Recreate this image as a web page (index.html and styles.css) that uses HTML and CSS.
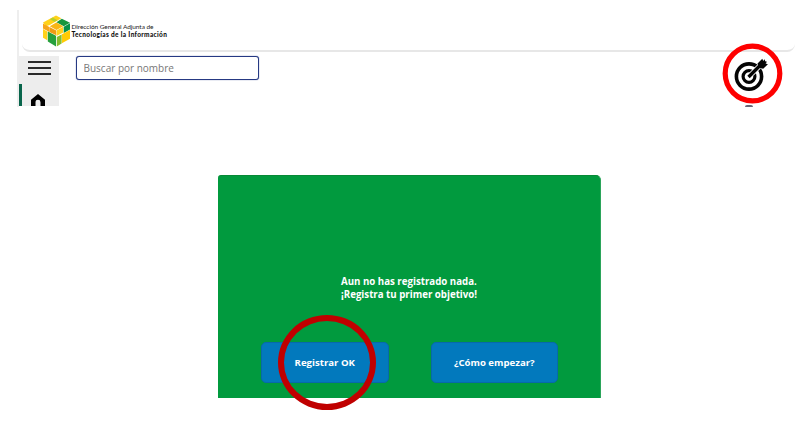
FILE: index.html
```html
<!DOCTYPE html>
<html lang="es">
<head>
<meta charset="utf-8">
<title>Objetivos</title>
<link rel="stylesheet" href="styles.css">
</head>
<body>
<section class="app">
  <header class="topbar">
    <svg class="logo" viewBox="0 0 28 32">
      <path fill="#ffd21a" d="M0 7.300 13.500 0l5.500 2.800L7 9.800 3 11z"/>
      <path fill="#b5cf2b" d="M7 3.700 10 2l5 2.800-3 1.700z"/>
      <path fill="#16973c" d="M19.500 3.200 28 7.500 21.500 11 14 7z"/>
      <path fill="#f8b617" d="M13.800 7.200 21 11 14 15 7 11.200z"/>
      <path fill="#f6a51a" d="M0 8.300l7 3.800v5.200L0 13.500z"/>
      <path fill="#ffd21a" d="M0 14l4.500 2.500v9L0 23z"/>
      <path fill="#26a03d" d="M5 16.400l8.500 4.600V32L5 27z"/>
      <path fill="#ef9b13" d="M7.200 12l6.500 3.500v5l-6.500-3.300z"/>
      <path fill="#ffd21a" d="M14 15.500 21 11.700v5.800l-7 3.800z"/>
      <path fill="#069247" d="M21.500 11.500 28 8v6.500l-6.500 3.500z"/>
      <path fill="#ffcb05" d="M19.600 19.300 28 15v9l-8.400 4.700z"/>
      <path fill="#86bd2d" d="M14.300 22.100 19.300 19.500v9.500l-5 3z"/>
    </svg>
    <div class="brand">
      <span class="brand-top">Dirección General Adjunta de</span>
      <strong class="brand-name">Tecnologías de la Información</strong>
    </div>
  </header>
  <div class="content">
    <nav class="sidebar">
      <div class="menu"><i></i><i></i><i></i></div>
      <div class="home">
        <svg viewBox="0 0 14 12"><path d="M7 0 0 5.800V12h4.500V8.300a2.500 2.500 0 0 1 5 0V12H14V5.800z"/></svg>
      </div>
    </nav>
    <input class="search" type="text" placeholder="Buscar por nombre">
    <div class="goal">
      <svg viewBox="0 0 61 61">
        <circle cx="30.500" cy="30.500" r="27.300" fill="none" stroke="#fe0000" stroke-width="5.200"/>
        <g fill="none" stroke="#050505">
          <circle cx="27" cy="33.500" r="12.600" stroke-width="3.600"/>
          <circle cx="27" cy="33.500" r="5.900" stroke-width="3.200"/>
          <path stroke="#fff" stroke-width="5.200" d="M29 31.500 41 19.500"/>
          <path stroke-width="3.400" d="M26.500 34 39 21.500"/>
        </g>
        <path fill="#050505" d="M35.500 20.500 40.300 15.800l.9 2.200 1.400-1.700.6 2 1.800.5-1.400 1.600 2.300.9-4.700 4.500-4.500-1.100z"/>
      </svg>
    </div>
    <span class="goal-tail"></span>
  </div>
</section>
<section class="dialog">
  <p class="message">Aun no has registrado nada.<br>¡Registra tu primer objetivo!</p>
  <div class="actions">
    <button class="btn">Registrar OK</button>
    <button class="btn">¿Cómo empezar?</button>
  </div>
  <span class="highlight"></span>
</section>
</body>
</html>
```
FILE: styles.css
```css
* { box-sizing: border-box; }
body {
  margin: 0;
  width: 799px;
  height: 428px;
  overflow: hidden;
  background: #fff;
  font-family: "Open Sans", sans-serif;
}
.app {
  position: relative;
  width: 778px;
  height: 97px;
  margin: 10px 0 0 17px;
  border-left: 2px solid #eee;
  overflow: hidden;
}
.topbar {
  display: flex;
  align-items: flex-start;
  height: 42px;
  margin-left: 3px;
  padding: 5px 0 0 21px;
  border-bottom: 2px solid #e7e7e7;
  border-radius: 0 0 8px 8px;
}
.logo { width: 27px; height: 32px; }
.brand {
  display: flex;
  flex-direction: column;
  margin: 8px 0 0 1.5px;
  font-family: Lato, sans-serif;
  font-size: 6.5px;
  line-height: 8px;
  white-space: nowrap;
  color: #222;
}
.brand-top { letter-spacing: -0.06px; }
.brand-name { font-weight: 900; letter-spacing: 0.34px; color: #111; }
.content { display: flex; height: 50px; margin-top: 4px; }
.sidebar {
  width: 40px;
  background: #ededed;
}
.menu {
  display: flex;
  flex-direction: column;
  gap: 4px;
  width: 23px;
  margin: 5px 0 0 9px;
}
.menu i { height: 2px; background: #2a2a2a; }
.home {
  height: 22px;
  margin-top: 9px;
  padding: 10px 0 0 9px;
  border-left: 3px solid #08654b;
}
.home svg { display: block; width: 14px; height: 12px; }
.search {
  width: 183px;
  height: 24px;
  margin: 0 0 0 17px;
  padding: 0 6px 0 6.5px;
  border: 1.5px solid #263983;
  border-radius: 3px;
  box-shadow: 0 0 1px #263983;
  font: 10px "Open Sans", sans-serif;
  outline: none;
}
.search::placeholder { color: #777; opacity: 1; }
.goal { position: absolute; left: 703px; top: 33px; width: 61px; height: 61px; }
.goal svg { display: block; width: 100%; height: 100%; }
.goal-tail {
  position: absolute;
  left: 726px;
  top: 95px;
  width: 8px;
  height: 2px;
  border-radius: 4px 4px 0 0;
  background: #667;
}
.dialog {
  position: relative;
  display: flex;
  flex-direction: column;
  width: 383px;
  height: 223px;
  margin: 68px 0 0 218px;
  border-top: 1px solid #078936;
  border-right: 1px solid #2ba45a;
  border-radius: 3px 5px 0 0;
  background: #019a3e;
  color: #fff;
}
.message {
  margin: 99px 0 0 123px;
  font-size: 9.7px;
  font-weight: 700;
  line-height: 13px;
  white-space: nowrap;
}
.actions { display: flex; gap: 42px; margin: 40.500px 0 0 43px; }
.btn {
  width: 127.5px;
  height: 41px;
  padding: 0;
  border: 1px solid #0869aa;
  border-radius: 5px;
  background: #0279bd;
  color: #fff;
  font: 700 9.6px "Open Sans", sans-serif;
}
.highlight {
  position: absolute;
  left: 60px;
  top: 139px;
  width: 98px;
  height: 95px;
  border: 6px solid #c00000;
  border-radius: 50%;
}
```
